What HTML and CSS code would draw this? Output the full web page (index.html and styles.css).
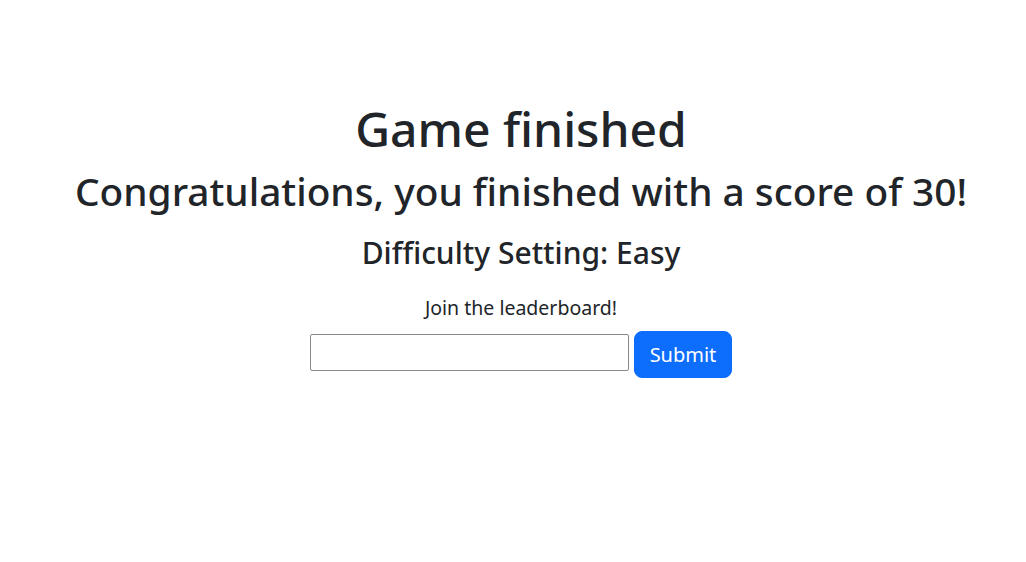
FILE: index.html
```html
<!DOCTYPE html>
<html lang="en">
<head>
<meta charset="utf-8">
<title>Game finished</title>
<link rel="stylesheet" href="styles.css">
</head>
<body>
<main class="result">
  <h1 class="title">Game finished</h1>
  <h2 class="score">Congratulations, you finished with a score of 30!</h2>
  <h3 class="difficulty">Difficulty Setting: Easy</h3>
  <p class="prompt">Join the leaderboard!</p>
  <form class="entry" onsubmit="return false;">
    <input class="name-input" type="text" aria-label="Name">
    <button class="submit-btn" type="submit">Submit</button>
  </form>
</main>
</body>
</html>
```

FILE: styles.css
```css
html, body {
  margin: 0;
  padding: 0;
  background: #ffffff;
}

body {
  font-family: "Noto Sans", "Open Sans", sans-serif;
  color: #212529;
}

.result {
  display: flex;
  flex-direction: column;
  align-items: center;
  text-align: center;
  padding-top: 100px;
  padding-left: 16px;
}

.title {
  margin: 0;
  font-size: 48px;
  font-weight: 500;
  line-height: 1.2;
}

.score {
  margin: 10px 0 0;
  font-size: 38.8px;
  font-weight: 500;
  line-height: 1.2;
  white-space: nowrap;
}

.difficulty {
  margin: 21px 0 0;
  font-size: 30px;
  font-weight: 500;
  line-height: 1.2;
}

.prompt {
  margin: 22px 0 0;
  font-size: 19.5px;
  line-height: 1.5;
}

.entry {
  display: flex;
  align-items: flex-start;
  gap: 5px;
  margin-top: 9px;
}

.name-input {
  box-sizing: border-box;
  width: 319px;
  height: 37px;
  margin-top: 3px;
  border: 1px solid #8a8a8a;
  border-radius: 2px;
  padding: 0 4px;
  font-family: inherit;
  font-size: 16px;
}

.submit-btn {
  box-sizing: border-box;
  width: 98px;
  height: 47px;
  padding: 0;
  border: 1px solid #0d6efd;
  border-radius: 8px;
  background: #0d6efd;
  color: #ffffff;
  font-family: inherit;
  font-size: 20px;
  line-height: 1.5;
  cursor: pointer;
}
```
